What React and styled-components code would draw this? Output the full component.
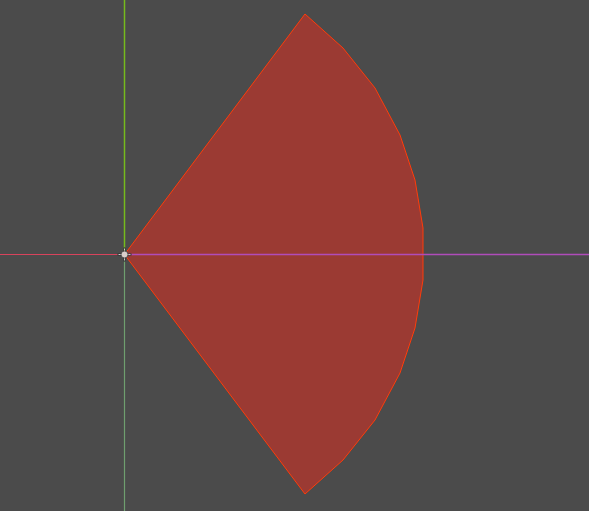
import React from 'react'
import styled, { createGlobalStyle } from 'styled-components';

const GlobalStyle = createGlobalStyle`
    html, body {
        margin: 0;
        padding: 0;
        background-color: #4b4b4b;
        overflow: hidden;
    }
`;

const ORIGIN = { x: 124.5, y: 254.5 };

const upper = [
    [305, 14], [343, 48], [375, 88], [400, 135], [415, 180], [423, 228],
];
const lower = upper.slice().reverse().map(([x, y]) => [x, 508 - y]);
const points = [[ORIGIN.x, ORIGIN.y], ...upper, ...lower]
    .map(([x, y]) => `${x},${y}`)
    .join(' ');

const App = () => {
  return (
    <>
      <GlobalStyle />
      <Viewport>
        <Scene viewBox="0 0 589 511" width="589" height="511">
          <polygon points={points} fill="#9b3a33" stroke="#ff3c0a" strokeWidth="1" />
          <line x1={ORIGIN.x} y1="0" x2={ORIGIN.x} y2={ORIGIN.y} stroke="#76bb1c" strokeWidth="1.5" />
          <line x1={ORIGIN.x} y1={ORIGIN.y} x2={ORIGIN.x} y2="511" stroke="#6f9f6f" strokeWidth="1.2" />
          <line x1="0" y1={ORIGIN.y} x2={ORIGIN.x} y2={ORIGIN.y} stroke="#d8435c" strokeWidth="1.2" />
          <line x1={ORIGIN.x} y1={ORIGIN.y} x2="589" y2={ORIGIN.y} stroke="#b04cba" strokeWidth="1.5" />
          <g>
            <rect x={ORIGIN.x - 7} y={ORIGIN.y - 1} width="14" height="2" fill="#2c2c2c" />
            <rect x={ORIGIN.x - 1} y={ORIGIN.y - 7} width="2" height="14" fill="#2c2c2c" />
            <rect x={ORIGIN.x - 6} y={ORIGIN.y - 0.5} width="12" height="1" fill="#cfc8c8" />
            <rect x={ORIGIN.x - 0.5} y={ORIGIN.y - 6} width="1" height="12" fill="#cfc8c8" />
            <circle cx={ORIGIN.x} cy={ORIGIN.y} r="3.5" fill="#d9cfcc" stroke="#3a3a3a" strokeWidth="0.8" />
          </g>
        </Scene>
      </Viewport>
    </>
  )
}

const Viewport = styled.main`
    display: flex;
    width: 589px;
    height: 511px;
    background-color: #4b4b4b;
`;

const Scene = styled.svg`
    display: block;
    flex-shrink: 0;
`;

export default App
